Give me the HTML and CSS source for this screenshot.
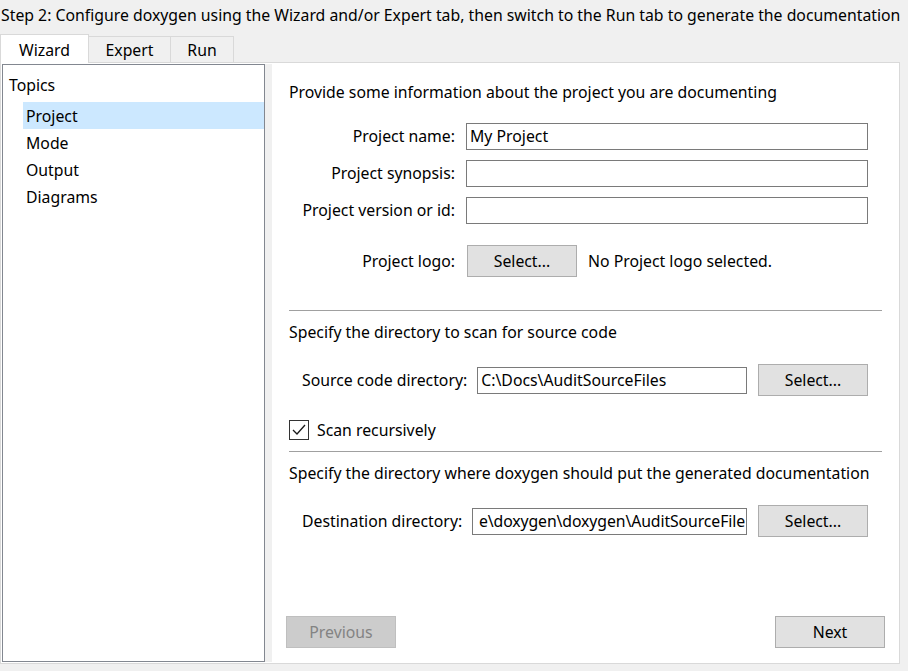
FILE: index.html
```html
<!DOCTYPE html>
<html>
<head>
<meta charset="utf-8">
<link rel="stylesheet" href="styles.css">
</head>
<body>
<div class="title">Step 2: Configure doxygen using the Wizard and/or Expert tab, then switch to the Run tab to generate the documentation</div>
<div class="tabs">
  <div class="tab active tab-wizard">Wizard</div>
  <div class="tab tab-expert">Expert</div>
  <div class="tab tab-run">Run</div>
</div>
<div class="pane">
  <div class="tree">
    <div class="tree-head">Topics</div>
    <div class="tree-children">
      <div class="tree-item selected">Project</div>
      <div class="tree-item">Mode</div>
      <div class="tree-item">Output</div>
      <div class="tree-item">Diagrams</div>
    </div>
  </div>
  <div class="splitter"></div>
  <div class="content">
    <div class="heading first">Provide some information about the project you are documenting</div>
    <div class="form">
      <div class="flabel">Project name:</div>
      <div class="field">My Project</div>
      <div class="flabel">Project synopsis:</div>
      <div class="field"></div>
      <div class="flabel">Project version or id:</div>
      <div class="field"></div>
    </div>
    <div class="logo-row">
      <div class="flabel">Project logo:</div>
      <div class="btn logo-btn">Select...</div>
      <div class="logo-note">No Project logo selected.</div>
    </div>
    <div class="rule rule-1"></div>
    <div class="heading">Specify the directory to scan for source code</div>
    <div class="dir-row">
      <div class="dlabel">Source code directory:</div>
      <div class="field dir-field">C:\Docs\AuditSourceFiles</div>
      <div class="btn">Select...</div>
    </div>
    <div class="check-row">
      <div class="checkbox">
        <svg width="14" height="12" viewBox="0 0 14 12"><polyline points="1,6 5,10 13,1" fill="none" stroke="#1a1a1a" stroke-width="1.3"/></svg>
      </div>
      <div class="check-label">Scan recursively</div>
    </div>
    <div class="rule rule-2"></div>
    <div class="heading">Specify the directory where doxygen should put the generated documentation</div>
    <div class="dir-row">
      <div class="dlabel">Destination directory:</div>
      <div class="field dir-field scrolled">e\doxygen\doxygen\AuditSourceFile</div>
      <div class="btn">Select...</div>
    </div>
    <div class="nav-row">
      <div class="btn disabled">Previous</div>
      <div class="btn">Next</div>
    </div>
  </div>
</div>
</body>
</html>
```
FILE: styles.css
```css
* { box-sizing: border-box; }
html, body {
  margin: 0;
  padding: 0;
  background: #f0f0f0;
}
body {
  width: 908px;
  height: 671px;
  overflow: hidden;
  font-family: "Noto Sans", "Open Sans", sans-serif;
  font-size: 15.8px;
  color: #000;
}
.title {
  height: 34px;
  line-height: 30px;
  padding-left: 1px;
  white-space: nowrap;
}
.tabs {
  display: flex;
  align-items: flex-end;
  height: 28px;
}
.tab {
  height: 26px;
  border: 1px solid #d9d9d9;
  border-bottom: none;
  background: #f0f0f0;
  display: flex;
  align-items: center;
  justify-content: center;
  margin-left: -1px;
}
.tab.active {
  height: 29px;
  margin-bottom: -1px;
  background: #fff;
  position: relative;
  z-index: 1;
  margin-left: 0;
  padding-top: 1px;
}
.tab-wizard { width: 89px; }
.tab-expert { width: 83px; }
.tab-run { width: 64px; }
.pane {
  width: 900px;
  height: 602px;
  border: 1px solid #d9d9d9;
  background: #fff;
  display: flex;
  padding: 1px 0 1px 1px;
}
.tree {
  flex: none;
  width: 263px;
  border: 1px solid #828790;
  background: #fff;
  padding-top: 7px;
}
.tree-head {
  height: 26px;
  line-height: 26px;
  padding-left: 6px;
}
.tree-children {
  margin-top: 4px;
  margin-left: 20px;
}
.tree-item {
  height: 27px;
  line-height: 29px;
  padding-left: 3px;
}
.tree-item.selected {
  background: #cce8ff;
}
.splitter {
  flex: none;
  width: 7px;
  background: #f0f0f0;
}
.content {
  flex: 1;
  min-width: 0;
  background: #fff;
  padding: 0 17px 14px 17px;
  display: flex;
  flex-direction: column;
}
.heading {
  height: 22px;
  line-height: 22px;
  margin-top: 10px;
  white-space: nowrap;
}
.heading.first {
  margin-top: 17px;
}
.form {
  display: grid;
  grid-template-columns: 166px 402px;
  grid-auto-rows: 27px;
  column-gap: 11px;
  row-gap: 10px;
  margin-top: 20px;
}
.flabel {
  text-align: right;
  line-height: 27px;
  white-space: nowrap;
}
.field {
  border: 1px solid #7a7a7a;
  height: 27px;
  line-height: 25px;
  padding-left: 3px;
  white-space: nowrap;
  overflow: hidden;
  background: #fff;
}
.logo-row {
  display: flex;
  align-items: center;
  height: 32px;
  margin-top: 21px;
}
.logo-row .flabel {
  width: 166px;
}
.logo-btn {
  margin-left: 12px;
}
.logo-note {
  margin-left: 11px;
}
.btn {
  width: 110px;
  height: 32px;
  flex: none;
  background: #e1e1e1;
  border: 1px solid #adadad;
  display: flex;
  align-items: center;
  justify-content: center;
}
.btn.disabled {
  background: #cccccc;
  border-color: #bfbfbf;
  color: #838383;
}
.rule {
  height: 1px;
  background: #a0a0a0;
}
.rule-1 { margin-top: 33px; }
.rule-2 { margin-top: 11px; }
.dir-row {
  display: flex;
  align-items: center;
  height: 32px;
  margin-top: 21px;
  margin-left: 13px;
  margin-right: 14px;
}
.dlabel {
  white-space: nowrap;
  margin-right: 10px;
}
.dir-field {
  flex: 1;
  min-width: 0;
  margin-right: 11px;
}
.dir-field.scrolled {
  padding-left: 0;
  padding-right: 1px;
  text-align: right;
  letter-spacing: -0.1px;
}
.check-row {
  display: flex;
  align-items: center;
  height: 20px;
  margin-top: 24px;
}
.checkbox {
  width: 20px;
  height: 20px;
  border: 1px solid #333;
  background: #fff;
  display: flex;
  align-items: center;
  justify-content: center;
}
.check-label {
  margin-left: 8px;
}
.nav-row {
  margin-top: auto;
  display: flex;
  justify-content: space-between;
  margin-left: -3px;
  margin-right: -3px;
}
```
